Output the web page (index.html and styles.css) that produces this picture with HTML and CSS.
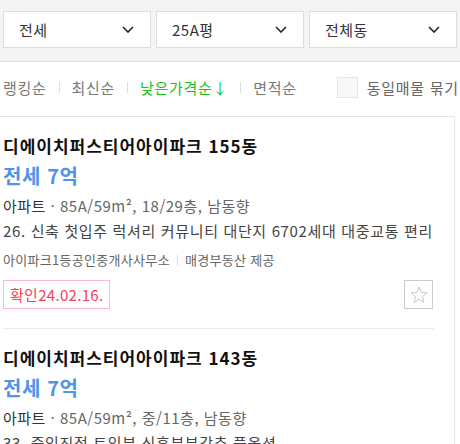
FILE: index.html
```html
<!DOCTYPE html>
<html lang="ko">
<head>
  <meta charset="UTF-8">
  <title>매물 목록</title>
  <link rel="stylesheet" href="styles.css">
</head>
<body>
  <div class="filters">
    <div class="select">전세<svg class="chevron" viewBox="0 0 12 7"><polyline points="1,1 6,6 11,1"/></svg></div>
    <div class="select">25A평<svg class="chevron" viewBox="0 0 12 7"><polyline points="1,1 6,6 11,1"/></svg></div>
    <div class="select">전체동<svg class="chevron" viewBox="0 0 12 7"><polyline points="1,1 6,6 11,1"/></svg></div>
  </div>

  <div class="sort-bar">
    <span class="sort">랭킹순</span>
    <span class="sort">최신순</span>
    <span class="sort active">낮은가격순↓</span>
    <span class="sort">면적순</span>
    <label class="group-check"><span class="box"></span>동일매물 묶기</label>
  </div>

  <div class="list">
    <div class="item">
      <div class="title">디에이치퍼스티어아이파크 155동</div>
      <div class="price">전세 7억</div>
      <div class="info"><span class="type">아파트</span> · 85A/59m², 18/29층, 남동향</div>
      <div class="desc">26. 신축 첫입주 럭셔리 커뮤니티 대단지 6702세대 대중교통 편리</div>
      <div class="agent">아이파크1등공인중개사사무소<span class="bar"></span>매경부동산 제공</div>
      <div class="item-foot">
        <span class="confirm">확인24.02.16.</span>
        <button class="star"><svg viewBox="0 0 20 20"><polygon points="10,2 12.2,7.6 18,7.8 13.5,11.6 15,17.4 10,14.2 5,17.4 6.5,11.6 2,7.8 7.8,7.6"/></svg></button>
      </div>
    </div>
    <div class="item">
      <div class="title">디에이치퍼스티어아이파크 143동</div>
      <div class="price">전세 7억</div>
      <div class="info"><span class="type">아파트</span> · 85A/59m², 중/11층, 남동향</div>
      <div class="desc">33. 즉입진정 트인뷰 신혼부부강추 풀옵션</div>
    </div>
  </div>
</body>
</html>
```

FILE: styles.css
```css
body {
  margin: 0;
  width: 460px;
  height: 444px;
  overflow: hidden;
  background: #fff;
  font-family: "Noto Sans CJK KR", "Noto Sans", sans-serif;
  color: #333;
}

.filters {
  background: #f4f4f4;
  border-bottom: 1px solid #ddd;
  padding: 11px 0 13px 3px;
  display: grid;
  grid-template-columns: repeat(3, 148px);
  gap: 5px;
}

.select {
  height: 37px;
  box-sizing: border-box;
  background: #fff;
  border: 1px solid #ddd;
  padding: 0 16px 0 15px;
  display: flex;
  align-items: center;
  justify-content: space-between;
  font-size: 15px;
  letter-spacing: 0.5px;
  color: #333;
}

.chevron {
  width: 12px;
  height: 7px;
  fill: none;
  stroke: #222;
  stroke-width: 1.6;
}

.sort-bar {
  height: 54px;
  box-sizing: border-box;
  padding: 0 0 3px 3px;
  display: flex;
  align-items: center;
  white-space: nowrap;
  font-size: 15px;
  letter-spacing: 0.7px;
  color: #777;
}

.sort {
  display: flex;
  align-items: center;
}

.sort + .sort::before {
  content: "";
  width: 1px;
  height: 11px;
  background: #ddd;
  margin: 0 12px;
}

.sort.active {
  color: #17c317;
}

.group-check {
  display: flex;
  align-items: center;
  margin-left: 40px;
  color: #666;
}

.box {
  width: 21px;
  height: 21px;
  box-sizing: border-box;
  border: 1px solid #e5e5e5;
  background: #f8f8f8;
  margin-right: 9px;
}

.list {
  width: 454px;
  border-top: 1px solid #e5e5e5;
  border-right: 1px solid #e5e5e5;
}

.item {
  margin: 0 20px 0 3px;
  padding: 17px 0 19px;
  border-bottom: 1px solid #eaeaea;
}

.title {
  font-size: 17px;
  font-weight: bold;
  line-height: 24px;
  letter-spacing: 1px;
  color: #111;
}

.price {
  margin-top: 4px;
  font-size: 20px;
  font-weight: bold;
  line-height: 28px;
  letter-spacing: 0.6px;
  color: #4f93ea;
}

.info {
  margin-top: 3px;
  font-size: 15px;
  line-height: 25px;
  letter-spacing: 0.5px;
  color: #666;
}

.info .type {
  color: #333;
}

.desc {
  font-size: 15px;
  line-height: 25px;
  letter-spacing: 0.65px;
  color: #444;
  white-space: nowrap;
}

.agent {
  margin-top: 7px;
  font-size: 13px;
  line-height: 20px;
  letter-spacing: 0.3px;
  color: #666;
  display: flex;
  align-items: center;
}

.bar {
  width: 1px;
  height: 11px;
  background: #ddd;
  margin: 0 7px;
}

.item-foot {
  margin-top: 10px;
  display: flex;
  justify-content: space-between;
  align-items: center;
}

.confirm {
  height: 29px;
  box-sizing: border-box;
  border: 1px solid #ffb9c2;
  padding: 0 6px;
  display: flex;
  align-items: center;
  font-size: 15px;
  letter-spacing: 0.3px;
  color: #f4405a;
}

.star {
  width: 29px;
  height: 29px;
  box-sizing: border-box;
  border: 1px solid #ccc;
  background: #fff;
  padding: 0;
  margin: 0 1px 0 0;
  display: flex;
  align-items: center;
  justify-content: center;
}

.star svg {
  width: 20px;
  height: 20px;
  fill: none;
  stroke: #c8c8c8;
  stroke-width: 1;
  stroke-linejoin: round;
}
```
